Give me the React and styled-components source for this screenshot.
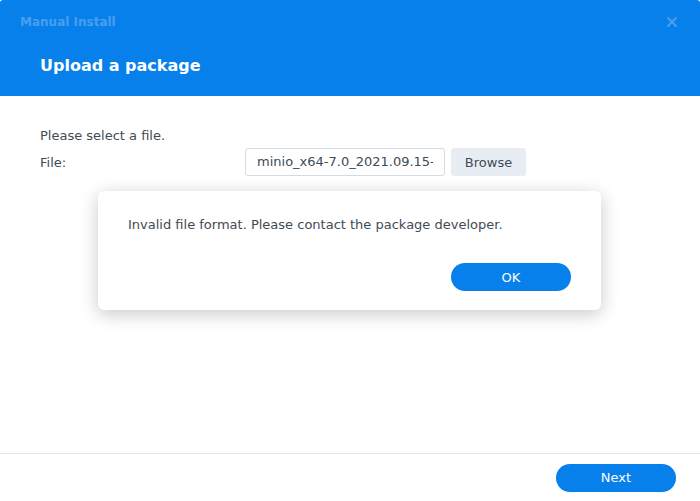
import React from "react";
import styled, { createGlobalStyle } from "styled-components";

const GlobalStyle = createGlobalStyle`
  html, body {
    margin: 0;
    padding: 0;
    background: #ffffff;
  }
  body {
    font-family: "DejaVu Sans", Verdana, sans-serif;
    color: #414b55;
  }
`;

const Window = styled.div`
  position: relative;
  width: 700px;
  height: 501px;
  display: flex;
  flex-direction: column;
  background: #ffffff;
  overflow: hidden;
`;

const Header = styled.div`
  height: 96px;
  background: #0780eb;
  border-radius: 3px 3px 0 0;
  display: flex;
  flex-direction: column;
  box-sizing: border-box;
  padding: 13px 20px 0 20px;
`;

const TitleBar = styled.div`
  display: flex;
  align-items: center;
  justify-content: space-between;
  height: 16px;
  margin-top: 1px;
`;

const WindowTitle = styled.div`
  font-size: 12px;
  font-weight: bold;
  color: #4a9ef0;
`;

const CloseIcon = styled.svg`
  width: 12px;
  height: 12px;
  margin-right: 2px;
`;

const Heading = styled.div`
  margin-top: 20px;
  padding-left: 20px;
  font-size: 16px;
  font-weight: bold;
  color: #ffffff;
  line-height: 32px;
`;

const Body = styled.div`
  position: relative;
  flex: 1;
  padding: 30px 40px 0 40px;
  display: flex;
  flex-direction: column;
  gap: 2px;
`;

const Text = styled.div`
  font-size: 13px;
  line-height: 20px;
`;

const FieldRow = styled.div`
  display: flex;
  align-items: center;
  height: 28px;
`;

const Label = styled.div`
  width: 205px;
  font-size: 13px;
`;

const FileInput = styled.div`
  box-sizing: border-box;
  flex: none;
  width: 200px;
  height: 28px;
  border: 1px solid #d3dbe5;
  border-radius: 3px;
  padding: 0 11px;
  font-size: 13px;
  line-height: 26px;
  color: #414b55;
  overflow: hidden;
`;

const InputValue = styled.div`
  white-space: nowrap;
  overflow: hidden;
`;

const Button = styled.div`
  box-sizing: border-box;
  flex: none;
  height: 28px;
  display: flex;
  align-items: center;
  justify-content: center;
  font-size: 13px;
  cursor: pointer;
  width: ${(p) => (p.$primary ? "120px" : "75px")};
  margin-left: ${(p) => (p.$primary ? "0" : "6px")};
  border-radius: ${(p) => (p.$primary ? "14px" : "3px")};
  background: ${(p) => (p.$primary ? "#0780eb" : "#e8edf4")};
  color: ${(p) => (p.$primary ? "#ffffff" : "#414b55")};
`;

const Dialog = styled.div`
  position: absolute;
  left: 98px;
  top: 95px;
  width: 503px;
  height: 119px;
  box-sizing: border-box;
  background: #ffffff;
  border-radius: 6px;
  box-shadow: 0 4px 18px rgba(0, 0, 0, 0.22);
  padding: 24px 30px 19px 30px;
  display: flex;
  flex-direction: column;
  justify-content: space-between;
`;

const Actions = styled.div`
  display: flex;
  justify-content: flex-end;
`;

const Footer = styled.div`
  height: 48px;
  border-top: 1px solid #e3e3e3;
  box-sizing: border-box;
  display: flex;
  align-items: center;
  justify-content: flex-end;
  padding: 0 24px 0 0;
`;

export default function App() {
  return (
    <>
      <GlobalStyle />
      <Window>
        <Header>
          <TitleBar>
            <WindowTitle>Manual Install</WindowTitle>
            <CloseIcon viewBox="0 0 12 12">
              <path d="M2 2 L10 10 M10 2 L2 10" stroke="#4a9ef0" strokeWidth="2" strokeLinecap="round" />
            </CloseIcon>
          </TitleBar>
          <Heading>Upload a package</Heading>
        </Header>
        <Body>
          <Text>Please select a file.</Text>
          <FieldRow>
            <Label>File:</Label>
            <FileInput>
              <InputValue>minio_x64-7.0_2021.09.15-1.spk</InputValue>
            </FileInput>
            <Button>Browse</Button>
          </FieldRow>
          <Dialog>
            <Text>Invalid file format. Please contact the package developer.</Text>
            <Actions>
              <Button $primary>OK</Button>
            </Actions>
          </Dialog>
        </Body>
        <Footer>
          <Button $primary>Next</Button>
        </Footer>
      </Window>
    </>
  );
}
